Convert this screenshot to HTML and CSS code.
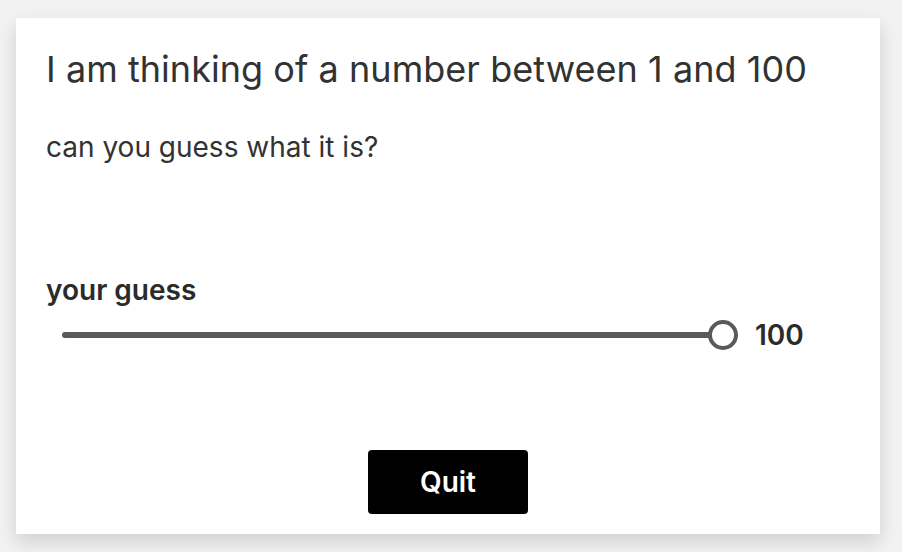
FILE: index.html
```html
<!DOCTYPE html>
<html>
<head>
<meta charset="utf-8">
<link rel="stylesheet" href="styles.css">
</head>
<body>
<div class="page">
  <div class="card">
    <h1 class="title">I am thinking of a number between 1 and 100</h1>
    <p class="subtitle">can you guess what it is?</p>
    <div class="field">
      <label class="label">your guess</label>
      <div class="slider-row">
        <div class="slider">
          <div class="track"></div>
          <div class="thumb"></div>
        </div>
        <span class="value">100</span>
      </div>
    </div>
    <div class="actions">
      <button class="quit">Quit</button>
    </div>
  </div>
</div>
</body>
</html>
```
FILE: styles.css
```css
html, body {
  margin: 0;
  padding: 0;
  background: #f2f2f2;
  font-family: Inter, "Noto Sans", sans-serif;
  color: #2b2b2b;
}
.page {
  padding: 18px 22px 18px 16px;
}
.card {
  background: #fff;
  height: 516px;
  box-sizing: border-box;
  padding: 29px 30px 0 30px;
  box-shadow: 0 8px 18px rgba(0, 0, 0, 0.14);
  display: flex;
  flex-direction: column;
}
.title {
  margin: 0;
  font-size: 36px;
  font-weight: 400;
  line-height: 44px;
  letter-spacing: 0.05px;
  color: #323232;
}
.subtitle {
  margin: 39px 0 0 0;
  font-size: 28px;
  line-height: 34px;
  color: #323232;
}
.field {
  margin-top: 109px;
}
.label {
  display: block;
  font-size: 28px;
  font-weight: 600;
  line-height: 34px;
  color: #2b2b2b;
}
.slider-row {
  display: flex;
  align-items: center;
  margin-top: 11px;
  padding-left: 16px;
}
.slider {
  position: relative;
  width: 676px;
  height: 32px;
}
.track {
  position: absolute;
  left: 0;
  right: 14px;
  top: 13px;
  height: 6px;
  border-radius: 3px;
  background: #5a5a5a;
}
.thumb {
  position: absolute;
  right: 0;
  top: 1px;
  width: 30px;
  height: 30px;
  box-sizing: border-box;
  border: 4px solid #5a5a5a;
  border-radius: 50%;
  background: #fff;
}
.value {
  margin-left: 17px;
  font-size: 28px;
  font-weight: 600;
  color: #2b2b2b;
}
.actions {
  display: flex;
  justify-content: center;
  margin-top: 98px;
}
.quit {
  width: 160px;
  height: 64px;
  background: #000;
  color: #fff;
  border: none;
  border-radius: 4px;
  font-family: Inter, "Noto Sans", sans-serif;
  font-size: 28px;
  font-weight: 600;
}
```
